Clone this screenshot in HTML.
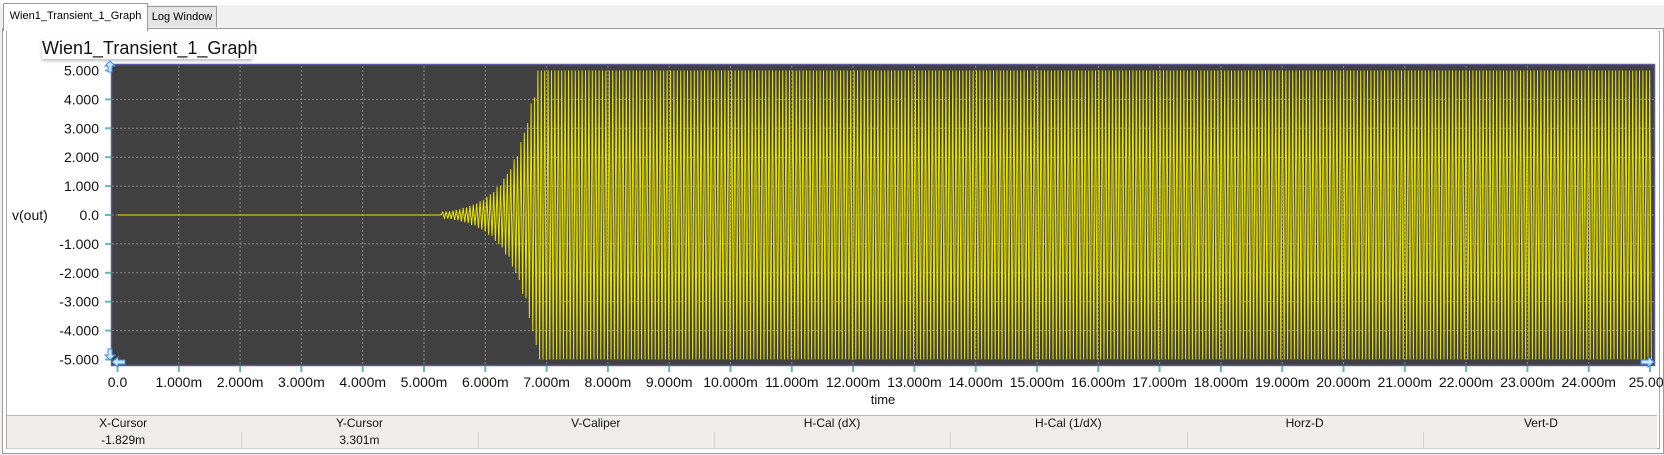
<!DOCTYPE html>
<html><head><meta charset="utf-8"><style>
html,body{margin:0;padding:0;background:#fff;width:1664px;height:455px;overflow:hidden;font-family:"Liberation Sans",Arial,sans-serif;}
.abs{position:absolute}
</style></head><body>
<div class="abs" style="left:0;top:0;width:1664px;height:455px;background:#f0f0f0"></div>
<div class="abs" style="left:0;top:0;width:1664px;height:5px;background:#fff"></div>
<div class="abs" style="left:147px;top:6px;width:68px;height:20px;background:#e4e4e4;border:1px solid #9a9a9a;border-bottom:none;font-size:11px;line-height:20px;text-align:center;color:#000">Log Window</div>
<div class="abs" style="left:2px;top:28px;width:1660px;height:424px;background:#fff;border:1px solid #9a9a9a"></div>
<div class="abs" style="left:3px;top:3px;width:143px;height:27px;background:#fff;border:1px solid #9a9a9a;border-bottom:none;font-size:11px;line-height:25px;text-align:center;color:#000;white-space:nowrap">Wien1_Transient_1_Graph</div>
<div class="abs" style="left:6px;top:31px;width:1652px;height:417px;border:1px solid #a8a8a8;border-top:none;background:#fff"></div>
<div class="abs" style="left:42px;top:37px;width:210px;height:22px;background:#fff;box-shadow:0 2px 3px rgba(0,0,0,0.25);font-size:18px;line-height:22px;text-align:center;color:#111">Wien1_Transient_1_Graph</div>
<svg class="abs" style="left:0;top:0" width="1664" height="455" id="g">
<rect x="111.5" y="64.5" width="1543" height="301" fill="#414141" stroke="#5c5c9c" stroke-width="1.5"/>
<g id="grid" stroke="#8a8a8a" stroke-width="1" stroke-dasharray="2,2"></g>
<g id="ticks" stroke="#6ab6b8" stroke-width="2"></g>
<polyline id="wave" fill="none" stroke="#e8e400" stroke-width="1" points=""/>
<g id="labels" font-family="Liberation Sans, Arial, sans-serif" font-size="14" fill="#111"></g>
<text x="12" y="220" font-size="14" fill="#111" font-family="Liberation Sans, Arial, sans-serif">v(out)</text>
<text x="883" y="404" font-size="13" fill="#111" text-anchor="middle" font-family="Liberation Sans, Arial, sans-serif">time</text>
<path d="M105 66 l5 -5 l5 5 h-3 v6 h-4 v-6z" fill="#cfe6ff" stroke="#3a8ee6" stroke-width="1"/>
<path d="M105 355 l5 5 l5 -5 h-3 v-6 h-4 v6z" fill="#cfe6ff" stroke="#3a8ee6" stroke-width="1"/>
<path d="M1648 357 l6 5 l-6 5 v-3 h-7 v-4 h7z" fill="#cfe6ff" stroke="#3a8ee6" stroke-width="1"/>
<path d="M118 357 l-6 5 l6 5 v-3 h7 v-4 h-7z" fill="#cfe6ff" stroke="#3a8ee6" stroke-width="1"/>
</svg>
<div class="abs" style="left:7px;top:415px;width:1650px;height:15px;background:#f0edeb;border-top:1px solid #b8b8b8;border-bottom:1px solid #b8b8b8"></div>
<div class="abs" style="left:7px;top:431px;width:1650px;height:17px;background:#f0edeb;border-bottom:1px solid #d0d0d0"></div>
<div id="tbl"></div>
<script>
var ns="http://www.w3.org/2000/svg";
function el(p,t,a,txt){var e=document.createElementNS(ns,t);for(var k in a)e.setAttribute(k,a[k]);if(txt!=null)e.textContent=txt;p.appendChild(e);return e;}
var grid=document.getElementById('grid'),ticks=document.getElementById('ticks'),lab=document.getElementById('labels');
var x0=117.5,dx=61.3,y0=215,dy=28.9;
for(var i=0;i<=25;i++){var x=x0+i*dx;if(i>0&&i<25)el(grid,'line',{x1:x,y1:66,x2:x,y2:365});
el(ticks,'line',{x1:x,y1:366,x2:x,y2:372});
el(lab,'text',{x:x,y:387,'text-anchor':'middle'},i==0?'0.0':(i==25?'25.000':i+'.000m'));}
for(var j=-5;j<=5;j++){var y=y0-j*dy;if(j!=5&&j!=-5)el(grid,'line',{x1:112,y1:y,x2:1654,y2:y});
el(ticks,'line',{x1:105,y1:y,x2:111,y2:y});
el(lab,'text',{x:99,y:y+5,'text-anchor':'end'},j==0?'0.0':(j<0?'-':'')+Math.abs(j)+'.000');}
var pts=[],s=1,step=1.7;
pts.push('118,'+y0);
for(var x=118;x<=1652;x+=step){var t=(x-x0)/dx;var A=0;
if(t>5.3){A=5*Math.exp((t-6.85)/0.4);if(A>5)A=5;}
s=-s;var v=A*s*(0.9+0.1*Math.abs(Math.sin(x*0.37)));if(A>=5)v=5*s;
pts.push(x.toFixed(2)+','+(y0-v*dy).toFixed(1));}
document.getElementById('wave').setAttribute('points',pts.join(' '));
var h=['X-Cursor','Y-Cursor','V-Caliper','H-Cal (dX)','H-Cal (1/dX)','Horz-D','Vert-D'],vals=['-1.829m','3.301m','','','','',''];
var tb=document.getElementById('tbl'),q='',w=236.3;
for(var i=0;i<7;i++){var l=5+i*w;
q+='<div class="abs" style="left:'+l+'px;top:416px;width:'+w+'px;height:14px;font-size:12px;line-height:14px;text-align:center;color:#111">'+h[i]+'</div>';
q+='<div class="abs" style="left:'+l+'px;top:432px;width:'+w+'px;height:16px;font-size:12px;line-height:16px;text-align:center;color:#111">'+vals[i]+'</div>';
if(i>0)q+='<div class="abs" style="left:'+l+'px;top:432px;width:1px;height:16px;background:#d4d0cc"></div>';}
tb.innerHTML=q;
</script>
</body></html>
